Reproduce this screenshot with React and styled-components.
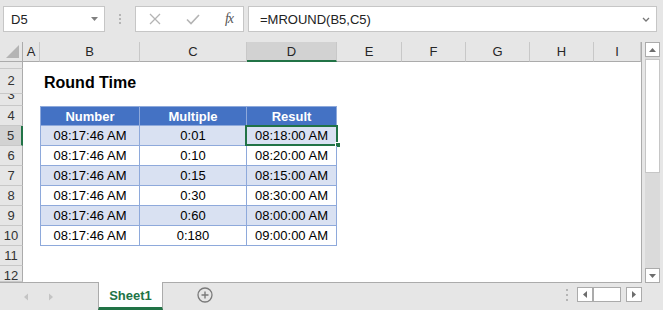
import React from "react";
import styled, { createGlobalStyle, css } from "styled-components";

const GlobalStyle = createGlobalStyle`
  html, body {
    margin: 0;
    padding: 0;
    overflow: hidden;
    background: #e6e6e6;
  }
  * {
    box-sizing: border-box;
  }
`;

const GREEN = "#217346";
const TABLE_LINE = "#8ea9db";

const columns = ["A", "B", "C", "D", "E", "F", "G", "H", "I"];
const colWidths = [17, 100, 107, 90, 65, 64, 64, 64, 47];

const data = [
  ["08:17:46 AM", "0:01", "08:18:00 AM"],
  ["08:17:46 AM", "0:10", "08:20:00 AM"],
  ["08:17:46 AM", "0:15", "08:15:00 AM"],
  ["08:17:46 AM", "0:30", "08:30:00 AM"],
  ["08:17:46 AM", "0:60", "08:00:00 AM"],
  ["08:17:46 AM", "0:180", "09:00:00 AM"],
];

// rows 1..12 as shown (row 1 and 3 scrolled / squashed)
const rowHeights = [7, 25, 12, 20, 20, 20, 20, 20, 20, 20, 20, 16];

const Page = styled.div`
  width: 663px;
  height: 310px;
  display: flex;
  flex-direction: column;
  font-family: "Liberation Sans", Arial, sans-serif;
  background: #e6e6e6;
  overflow: hidden;
`;

const FormulaBar = styled.div`
  height: 42px;
  flex-shrink: 0;
  display: flex;
  align-items: flex-start;
  padding: 6px 6px 0 3px;
`;

const Box = styled.div`
  height: 26px;
  background: #fff;
  border: 1px solid #c6c6c6;
  display: flex;
  align-items: center;
`;

const NameBox = styled(Box)`
  width: 102px;
  padding: 0 6px 0 7px;
  justify-content: space-between;
  font-size: 13px;
  color: #222;
`;

const Grip = styled.div`
  width: 30px;
  height: 26px;
  display: flex;
  flex-direction: column;
  align-items: center;
  justify-content: center;
  gap: 2px;
  & > span {
    width: 2px;
    height: 2px;
    background: #b5b5b5;
  }
`;

const FxBox = styled(Box)`
  width: 109px;
  padding: 0 10px 0 13px;
  justify-content: space-between;
`;

const Fx = styled.span`
  font-family: "Liberation Serif", "Times New Roman", serif;
  font-style: italic;
  font-size: 14px;
  color: #555;
  letter-spacing: -1px;
`;

const FormulaInput = styled(Box)`
  flex: 1;
  margin-left: 4px;
  padding: 0 6px 0 11px;
  justify-content: space-between;
  font-size: 13px;
  color: #222;
`;

const SheetRow = styled.div`
  display: flex;
  height: 241px;
  flex-shrink: 0;
`;

const Grid = styled.div`
  display: grid;
  grid-template-columns: 23px ${colWidths.map((w) => w + "px").join(" ")};
  grid-template-rows: 20px ${rowHeights.map((h) => h + "px").join(" ")};
  width: 642px;
  height: 241px;
  background: #fff;
  border-right: 1px solid #ababab;
  border-bottom: 1px solid #ababab;
  font-size: 13px;
  color: #000;
`;

const Corner = styled.div`
  background: #e6e6e6;
  border-right: 1px solid #ababab;
  border-bottom: 1px solid #ababab;
  display: flex;
  align-items: flex-end;
  justify-content: flex-end;
  padding: 0 3px 3px 0;
`;

const ColHead = styled.div`
  background: ${(p) => (p.$active ? "#d2d2d2" : "#e6e6e6")};
  border-right: 1px solid #c8c8c8;
  border-bottom: ${(p) => (p.$active ? `2px solid ${GREEN}` : "1px solid #ababab")};
  display: flex;
  align-items: center;
  justify-content: center;
  font-size: 13px;
  color: #262626;
  padding-top: ${(p) => (p.$active ? "1px" : "0")};
`;

const RowHead = styled.div`
  background: ${(p) => (p.$active ? "#d2d2d2" : "#e6e6e6")};
  border-right: ${(p) => (p.$active ? `2px solid ${GREEN}` : "1px solid #ababab")};
  border-bottom: 1px solid #c8c8c8;
  display: flex;
  justify-content: center;
  align-items: ${(p) => p.$align || "center"};
  overflow: hidden;
  font-size: 13px;
  color: #333;
  & > span {
    line-height: 20px;
    flex-shrink: 0;
  }
`;

const Cell = styled.div`
  display: flex;
  align-items: center;
  justify-content: center;
  white-space: nowrap;
  position: relative;
  ${(p) =>
    p.$kind &&
    css`
      border-right: 1px solid ${TABLE_LINE};
      border-bottom: 1px solid ${TABLE_LINE};
    `}
  ${(p) => p.$first && css`border-left: 1px solid ${TABLE_LINE};`}
  ${(p) =>
    p.$kind === "head" &&
    css`
      background: #4472c4;
      border-top: 1px solid ${TABLE_LINE};
      color: #fff;
      font-weight: bold;
    `}
  ${(p) => p.$kind === "band" && css`background: #d9e1f2;`}
`;

const Title = styled(Cell)`
  justify-content: flex-start;
  padding: 3px 0 0 4px;
  font-size: 16px;
  font-weight: bold;
`;

const Selection = styled.div`
  position: absolute;
  top: -1px;
  left: -2px;
  right: -2px;
  bottom: -1px;
  border: 2px solid ${GREEN};
  pointer-events: none;
`;

const FillHandle = styled.div`
  position: absolute;
  right: -5px;
  bottom: -4px;
  width: 6px;
  height: 6px;
  background: ${GREEN};
  border: 1px solid #fff;
`;

const VScroll = styled.div`
  margin-left: 3px;
  width: 15px;
  display: flex;
  flex-direction: column;
  background: #dadada;
`;

const ScrollBtn = styled.div`
  height: ${(p) => p.$h || 15}px;
  background: #fff;
  border: 1px solid #ababab;
  display: flex;
  align-items: center;
  justify-content: center;
`;

const Thumb = styled.div`
  height: 114px;
  margin-top: 2px;
  background: #fff;
  border: 1px solid #c6c6c6;
`;

const Track = styled.div`
  flex: 1;
`;

const TabBar = styled.div`
  flex: 1;
  min-height: 0;
  display: flex;
  align-items: stretch;
`;

const TabNav = styled.div`
  width: 98px;
  display: flex;
  align-items: center;
  gap: 21px;
  padding-left: 24px;
`;

const Tab = styled.div`
  width: 65px;
  margin-top: -1px;
  background: #fff;
  border-left: 1px solid #ababab;
  border-right: 1px solid #ababab;
  border-bottom: 3px solid ${GREEN};
  display: flex;
  align-items: center;
  justify-content: center;
  padding-top: 1px;
  color: ${GREEN};
  font-weight: bold;
  font-size: 13px;
`;

const AddSheet = styled.div`
  width: 84px;
  display: flex;
  align-items: center;
  justify-content: center;
  padding-bottom: 3px;
`;

const Spacer = styled.div`
  flex: 1;
`;

const HScroll = styled.div`
  display: flex;
  align-items: center;
  padding: 0 21px 4px 0;
`;

const HDots = styled(Grip)`
  width: 14px;
  margin-right: 3px;
  gap: 3px;
`;

const HBtn = styled.div`
  width: ${(p) => p.$w}px;
  height: 15px;
  margin-left: ${(p) => p.$gap || 0}px;
  background: #fff;
  border: 1px solid #ababab;
  display: flex;
  align-items: center;
  justify-content: center;
`;

const Tri = ({ dir = "down", color = "#777", size = 7 }) => {
  const pts = {
    down: "0,0 7,0 3.5,4",
    up: "0,4 7,4 3.5,0",
    left: "4,0 4,7 0,3.5",
    right: "0,0 0,7 4,3.5",
  }[dir];
  const vertical = dir === "up" || dir === "down";
  return (
    <svg width={vertical ? size : 4} height={vertical ? 4 : size} viewBox={vertical ? "0 0 7 4" : "0 0 4 7"}>
      <polygon points={pts} fill={color} />
    </svg>
  );
};

const rowHeadAlign = (n) => {
  if (n === 1 || n === 3) return "flex-end";
  if (n === 12) return "flex-start";
  return "center";
};

function renderCell(rowNum, colIdx) {
  const key = `${rowNum}-${colIdx}`;
  const col = columns[colIdx];
  if (rowNum === 2 && col === "B") {
    return <Title key={key}>Round Time</Title>;
  }
  const inTable = rowNum >= 4 && rowNum <= 10 && colIdx >= 1 && colIdx <= 3;
  if (!inTable) return <Cell key={key} />;
  const first = colIdx === 1;
  if (rowNum === 4) {
    return (
      <Cell key={key} $kind="head" $first={first}>
        {["Number", "Multiple", "Result"][colIdx - 1]}
      </Cell>
    );
  }
  const i = rowNum - 5;
  const kind = i % 2 === 0 ? "band" : "plain";
  const selected = rowNum === 5 && col === "D";
  return (
    <Cell key={key} $kind={kind} $first={first}>
      {data[i][colIdx - 1]}
      {selected && (
        <Selection>
          <FillHandle />
        </Selection>
      )}
    </Cell>
  );
}

export default function App() {
  return (
    <Page>
      <GlobalStyle />
      <FormulaBar>
        <NameBox>
          <span>D5</span>
          <Tri dir="down" color="#808080" />
        </NameBox>
        <Grip>
          <span />
          <span />
          <span />
        </Grip>
        <FxBox>
          <svg width="12" height="12" viewBox="0 0 12 12">
            <path d="M1 1 L11 11 M11 1 L1 11" stroke="#b4b4b4" strokeWidth="1.3" fill="none" />
          </svg>
          <svg width="14" height="11" viewBox="0 0 14 11">
            <path d="M1 5.5 L5 9.5 L13 1" stroke="#b4b4b4" strokeWidth="1.6" fill="none" />
          </svg>
          <Fx>fx</Fx>
        </FxBox>
        <FormulaInput>
          <span>=MROUND(B5,C5)</span>
          <svg width="8" height="5" viewBox="0 0 8 5">
            <path d="M1 1 L4 4 L7 1" stroke="#777" strokeWidth="1.3" fill="none" />
          </svg>
        </FormulaInput>
      </FormulaBar>

      <SheetRow>
        <Grid>
          <Corner>
            <svg width="13" height="13" viewBox="0 0 13 13">
              <polygon points="13,0 13,13 0,13" fill="#b4b4b4" />
            </svg>
          </Corner>
          {columns.map((c) => (
            <ColHead key={c} $active={c === "D"}>
              {c}
            </ColHead>
          ))}
          {rowHeights.map((_, r) => {
            const n = r + 1;
            return (
              <React.Fragment key={n}>
                <RowHead $active={n === 5} $align={rowHeadAlign(n)}>
                  <span>{n}</span>
                </RowHead>
                {columns.map((_, ci) => renderCell(n, ci))}
              </React.Fragment>
            );
          })}
        </Grid>
        <VScroll>
          <ScrollBtn>
            <Tri dir="up" color="#6d6d6d" />
          </ScrollBtn>
          <Thumb />
          <Track />
          <ScrollBtn>
            <Tri dir="down" color="#6d6d6d" />
          </ScrollBtn>
        </VScroll>
      </SheetRow>

      <TabBar>
        <TabNav>
          <Tri dir="left" color="#c4c4c4" size={8} />
          <Tri dir="right" color="#c4c4c4" size={8} />
        </TabNav>
        <Tab>Sheet1</Tab>
        <AddSheet>
          <svg width="16" height="16" viewBox="0 0 16 16">
            <circle cx="8" cy="8" r="7" stroke="#7a7a7a" strokeWidth="1.3" fill="none" />
            <path d="M8 4.5 V11.5 M4.5 8 H11.5" stroke="#7a7a7a" strokeWidth="1.4" />
          </svg>
        </AddSheet>
        <Spacer />
        <HScroll>
          <HDots>
            <span />
            <span />
            <span />
          </HDots>
          <HBtn $w={16}>
            <Tri dir="left" color="#6d6d6d" />
          </HBtn>
          <HBtn $w={28} />
          <HBtn $w={16} $gap={5}>
            <Tri dir="right" color="#6d6d6d" />
          </HBtn>
        </HScroll>
      </TabBar>
    </Page>
  );
}
